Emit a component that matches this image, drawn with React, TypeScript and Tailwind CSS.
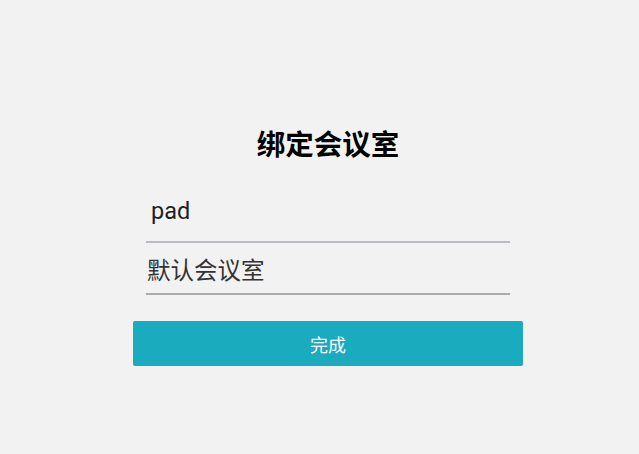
import React from 'react';

/**
 * Bind meeting room form.
 */
export default function App() {
  return (
    <div
      className="w-[639px] h-[454px] bg-[#f2f2f2] flex justify-center pl-[17px] pt-[132px]"
      style={{ fontFamily: 'Roboto, "Noto Sans CJK SC", sans-serif' }}
    >
      <div className="w-[390px] flex flex-col">
        {/* Title */}
        <h1 className="h-[28px] leading-[28px] text-[28.5px] font-bold text-black text-center">
          绑定会议室
        </h1>

        {/* Fields */}
        <div className="mx-[13px] mt-[37px] border-b-2 border-[#b8bbc7] pb-[16px]">
          <div className="h-[28px] leading-[28px] pl-[5px] text-[23.5px] text-[#1f1f1f]">pad</div>
        </div>
        <div className="mx-[13px] pt-[14px] pb-[8px] border-b-2 border-[#ababab]">
          <div className="h-[28px] leading-[28px] pl-[1px] text-[23.5px] text-[#333333]">默认会议室</div>
        </div>

        {/* Submit */}
        <button className="mt-[26px] h-[45px] w-full rounded-[2px] bg-[#1babbf] text-white text-[18px] pt-[4px]">
          完成
        </button>
      </div>
    </div>
  );
}
